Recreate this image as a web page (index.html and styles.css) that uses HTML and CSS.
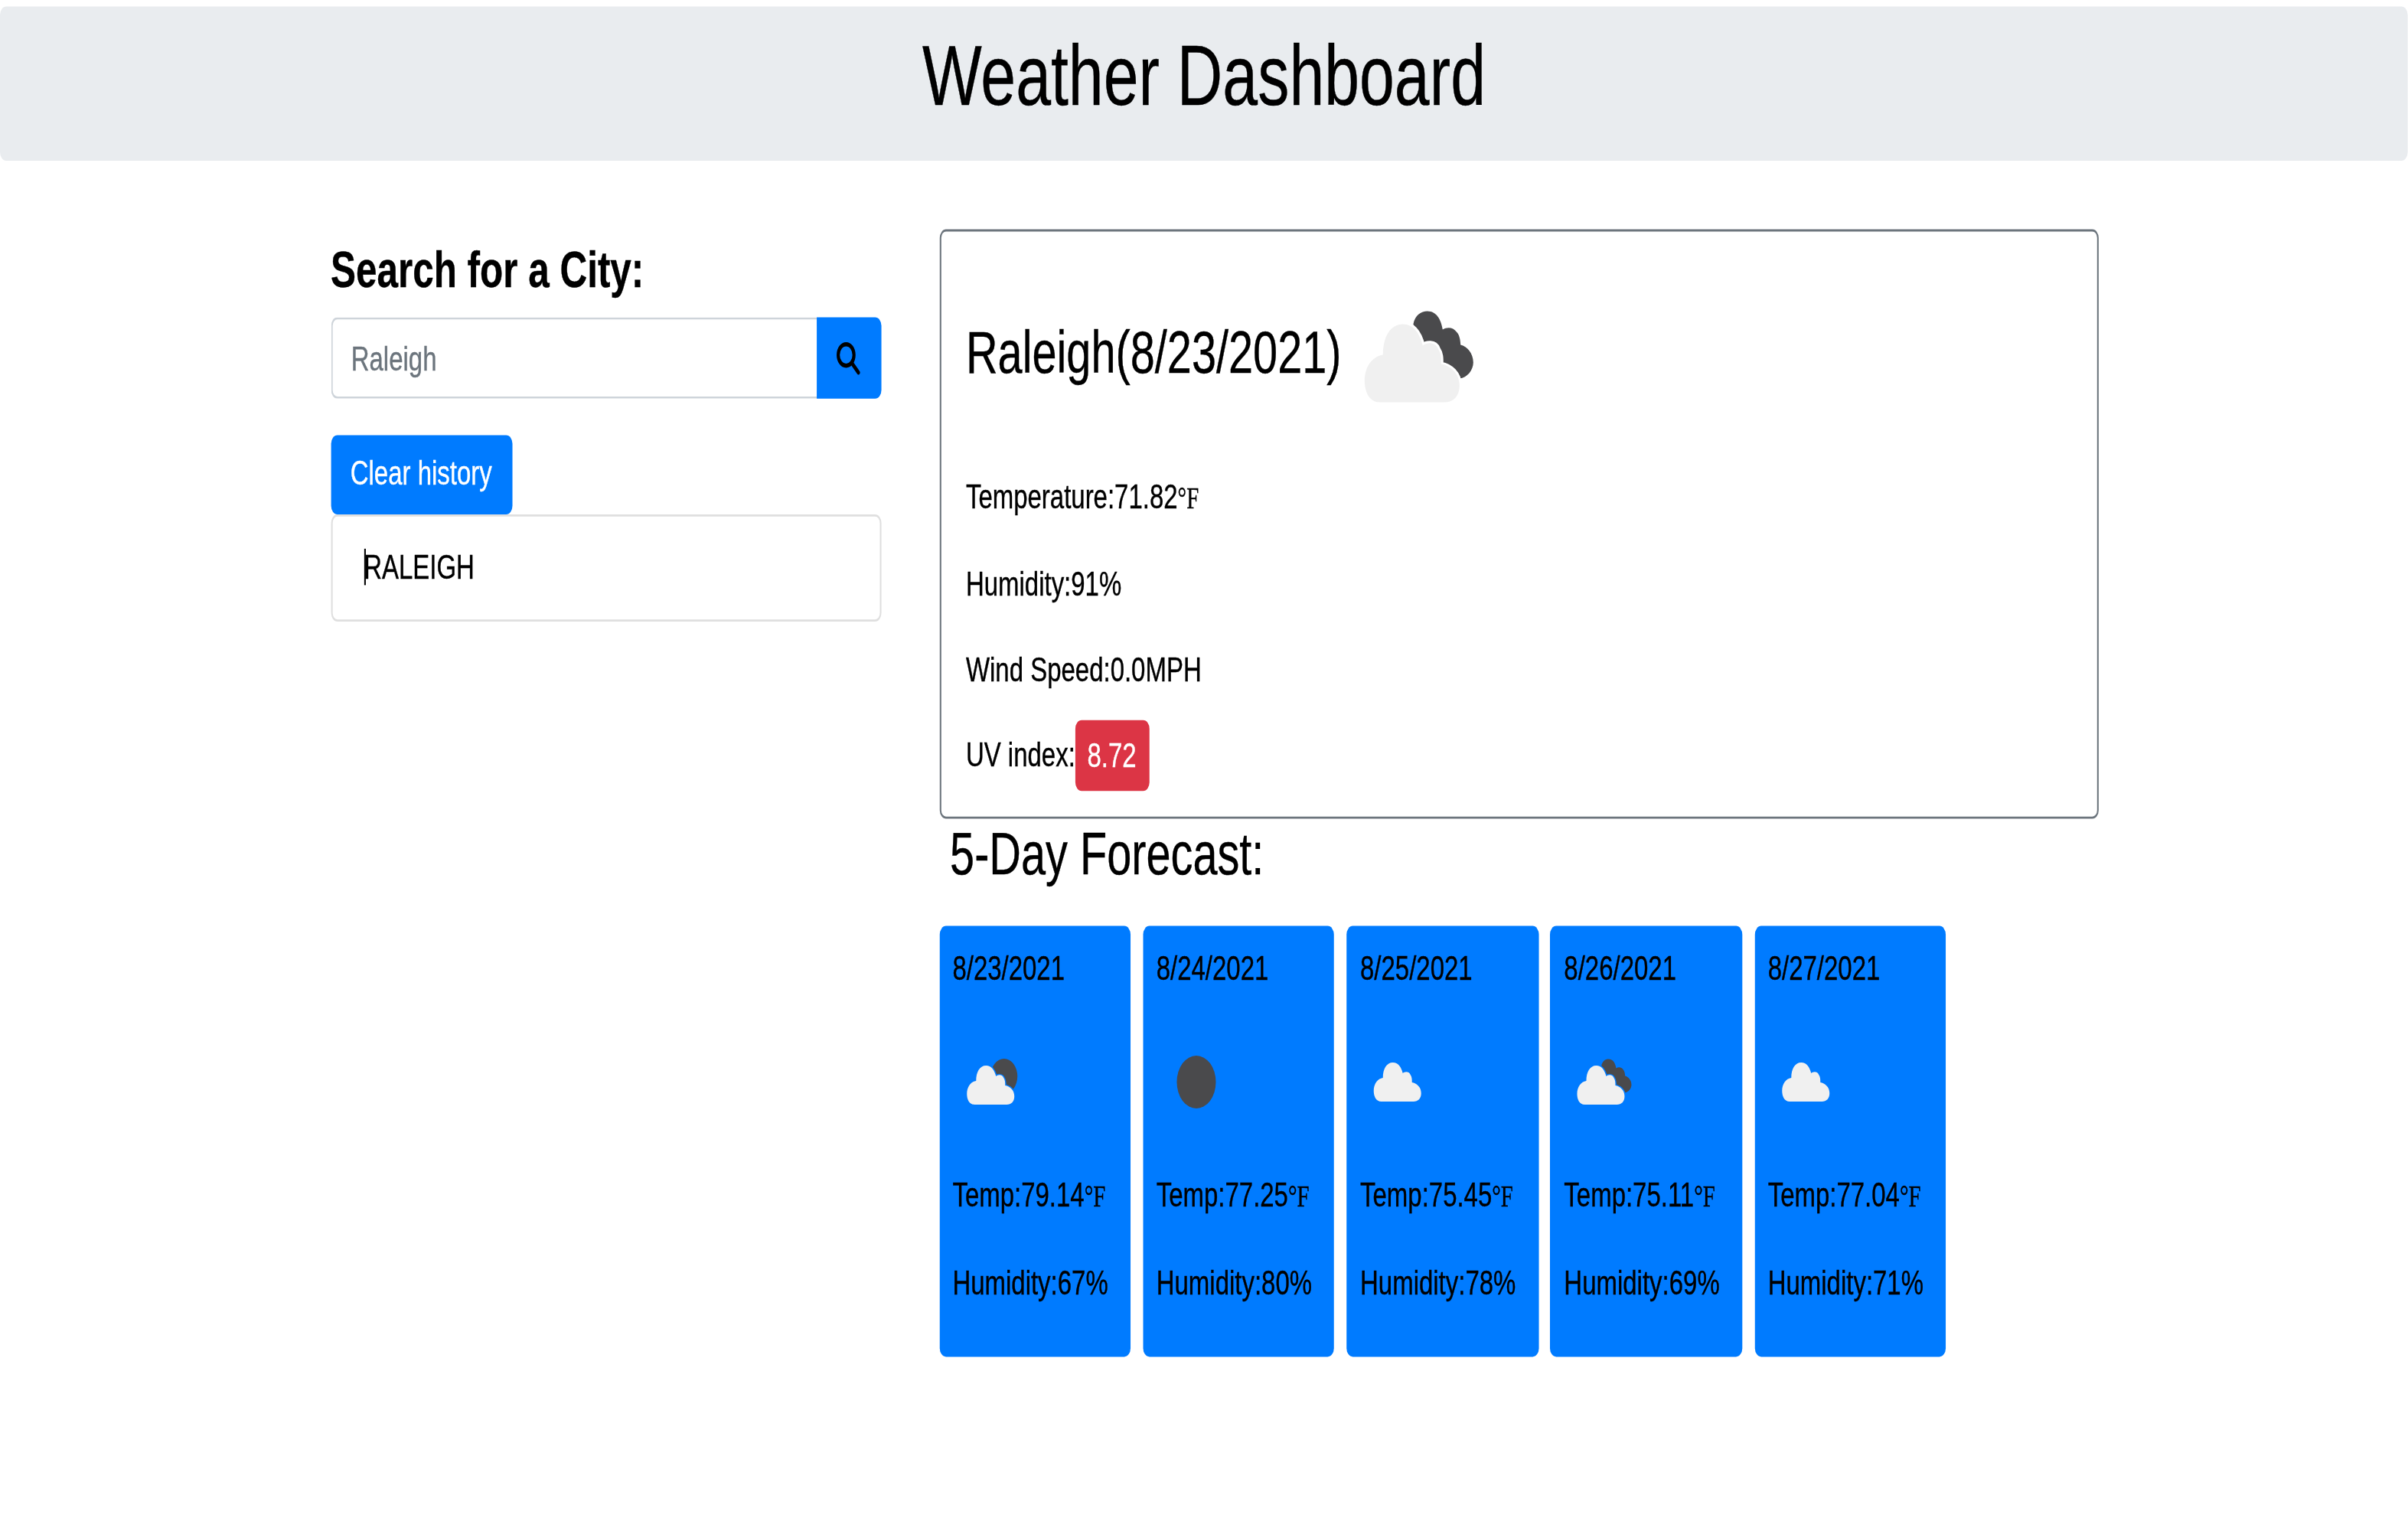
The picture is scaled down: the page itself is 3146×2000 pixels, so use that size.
FILE: index.html
```html
<!DOCTYPE html>
<html lang="en">
<head>
<meta charset="utf-8">
<title>Weather Dashboard</title>
<link rel="stylesheet" href="styles.css">
</head>
<body>
<svg class="defs" width="0" height="0" aria-hidden="true">
  <defs>
    <path id="cloud-shape" d="M29 99C22 99 19 92 19 85C19 76 24 69 31 68C31 56 36 48 44 48C51 48 55 54 57 62C59 60 65 59 67 64C69 67 69 70 69 74C75 75 81 80 81 88C81 95 77 99 71 99Z"/>
    <mask id="behind-cloud" maskUnits="userSpaceOnUse" x="0" y="0" width="103" height="140">
      <rect width="103" height="140" fill="#fff"/>
      <use href="#cloud-shape" fill="#000" stroke="#000" stroke-width="3"/>
    </mask>
    <symbol id="icon-few" viewBox="0 0 103 140" preserveAspectRatio="none">
      <ellipse cx="67.5" cy="62" rx="17.5" ry="23" fill="#4a4a4c" mask="url(#behind-cloud)"/>
      <use href="#cloud-shape" fill="#f0f0f0"/>
    </symbol>
    <symbol id="icon-clear" viewBox="0 0 103 140" preserveAspectRatio="none">
      <ellipse cx="53" cy="69.5" rx="25.5" ry="34.5" fill="#4a4a4c"/>
    </symbol>
    <symbol id="icon-scattered" viewBox="0 0 103 140" preserveAspectRatio="none">
      <use href="#cloud-shape" fill="#f0f0f0" y="-4"/>
    </symbol>
    <symbol id="icon-broken" viewBox="0 0 103 140" preserveAspectRatio="none">
      <path d="M50.8 48C52 42 56 39.5 60 39.5C66 39.5 69 45 70 51.5C73 49.5 77 50 79 53C81 55 81.5 58 81.7 61.5C86 62.5 90 67 90 73C90 78 86 83 81 83.5L60 75Z" fill="#4a4a4c" mask="url(#behind-cloud)"/>
      <use href="#cloud-shape" fill="#f0f0f0"/>
    </symbol>
  </defs>
</svg>
<div class="viewport">
<div class="stage">
  <header class="banner"><h1 class="banner-title">Weather Dashboard</h1></header>
  <main class="layout">
    <aside class="sidebar">
      <h4 class="search-title">Search for a City:</h4>
      <div class="search-group">
        <input class="search-input" type="text" value="Raleigh" aria-label="City">
        <button class="search-button" type="button" aria-label="Search">
          <svg class="search-icon" viewBox="0 0 16 16"><ellipse cx="6.6" cy="6.6" rx="5" ry="5" fill="none" stroke="#000" stroke-width="2"/><path d="M10.3 10.4L14.4 14.8" stroke="#000" stroke-width="2" stroke-linecap="round" fill="none"/></svg>
        </button>
      </div>
      <button class="clear-button" type="button">Clear history</button>
      <ul class="history">
        <li class="history-item">RALEIGH<span class="text-cursor"></span></li>
      </ul>
    </aside>
    <section class="content">
      <div class="today">
        <div class="today-head">
          <h3 class="today-title">Raleigh(8/23/2021)</h3>
          <svg class="today-icon"><use href="#icon-broken"/></svg>
        </div>
        <p class="stat">Temperature:71.82<span class="deg">°F</span></p>
        <p class="stat">Humidity:91%</p>
        <p class="stat">Wind Speed:0.0MPH</p>
        <p class="stat stat-uv">UV index:<span class="uv-badge">8.72</span></p>
      </div>
      <h2 class="forecast-title">5-Day Forecast:</h2>
      <div class="forecast">
        <article class="day">
          <p class="day-date">8/23/2021</p>
          <svg class="day-icon"><use href="#icon-few"/></svg>
          <p class="day-line">Temp:79.14<span class="deg">°F</span></p>
          <p class="day-line">Humidity:67%</p>
        </article>
        <article class="day">
          <p class="day-date">8/24/2021</p>
          <svg class="day-icon"><use href="#icon-clear"/></svg>
          <p class="day-line">Temp:77.25<span class="deg">°F</span></p>
          <p class="day-line">Humidity:80%</p>
        </article>
        <article class="day">
          <p class="day-date">8/25/2021</p>
          <svg class="day-icon"><use href="#icon-scattered"/></svg>
          <p class="day-line">Temp:75.45<span class="deg">°F</span></p>
          <p class="day-line">Humidity:78%</p>
        </article>
        <article class="day">
          <p class="day-date">8/26/2021</p>
          <svg class="day-icon"><use href="#icon-broken"/></svg>
          <p class="day-line">Temp:75.11<span class="deg">°F</span></p>
          <p class="day-line">Humidity:69%</p>
        </article>
        <article class="day">
          <p class="day-date">8/27/2021</p>
          <svg class="day-icon"><use href="#icon-scattered"/></svg>
          <p class="day-line">Temp:77.04<span class="deg">°F</span></p>
          <p class="day-line">Humidity:71%</p>
        </article>
      </div>
    </section>
  </main>
</div>
</div>
</body>
</html>
```
FILE: styles.css
```css
* { box-sizing: border-box; }
html, body { height: 100%; }
html { background: #fff; }
body { margin: 0; font-family: "Liberation Sans", Arial, sans-serif; font-size: 16px; line-height: 24px; color: #000; -webkit-text-stroke: .15px currentColor; }
.defs { position: absolute; }

.viewport { width: 100%; height: 2000px; overflow: hidden; }
/* The screenshot is an anamorphically stretched page, so the whole page is laid out at its source size and scaled. */
.stage { width: 1527.2px; height: 714.3px; padding-top: 3.2px; transform: scale(2.06, 2.8); transform-origin: 0 0; filter: blur(.25px); }

.banner { background: #e9ecef; border-radius: 4px; padding: 8px 0 16px; }
.banner-title { margin: 0; font-size: 40px; line-height: 48px; font-weight: 400; text-align: center; }

.layout { display: grid; grid-template-columns: 349px 735px; column-gap: 36.9px; padding-left: 209.7px; margin-top: 32.3px; }

.sidebar { padding-top: 4.1px; }
.search-title { margin: 0 0 7.8px; font-size: 24px; line-height: 28.8px; font-weight: 700; }
.search-group { display: flex; height: 38.3px; margin-bottom: 16.3px; }
.search-input { flex: 1; min-width: 0; font: inherit; color: #6c757d; padding: 6.6px 12px 5.4px; background: #fff; border: 1px solid #ced4da; border-right: 0; border-radius: 4px 0 0 4px; outline: 0; }
.search-button { width: 40.6px; display: flex; align-items: center; justify-content: center; padding: 0; background: #007bff; border: 0; border-radius: 0 4px 4px 0; }
.search-icon { width: 16px; height: 16px; }
.clear-button { display: block; height: 37px; padding: 0 12.5px; font: inherit; color: #fff; background: #007bff; border: 0; border-radius: 4px; }

.history { list-style: none; margin: 0; padding: 0; }
.history-item { position: relative; padding: 12.4px 20px 11.6px; border: 1px solid rgba(0, 0, 0, .125); border-radius: 4px; color: #000; }
.text-cursor { position: absolute; left: 20.4px; top: 15.6px; width: 1px; height: 17px; background: #000; }

.today { height: 274.5px; padding: 8.3px 16px 0; border: 1px solid #6c757d; border-radius: 4px; }
.today-head { display: flex; align-items: center; height: 100px; margin-bottom: 3.2px; }
.today-title { margin: 0; font-size: 28px; line-height: 33.6px; font-weight: 400; position: relative; top: -2.3px; }
.today-icon { display: block; width: 100px; height: 100px; margin-left: -3.5px; }
.stat { margin: 0 0 16px; }
.stat-uv { margin-top: -4.5px; }
.uv-badge { display: inline-block; margin-left: -.4px; padding: 4.5px 8px; color: #fff; background: #dc3545; border-radius: 4px; }
.deg { font-family: "Liberation Serif", "Times New Roman", serif; font-size: 14px; }

.forecast-title { margin: .4px 0 15.8px 6.9px; font-size: 28px; line-height: 33.6px; font-weight: 400; }
.forecast { display: flex; gap: 7.9px; }
.day { width: 121.4px; height: 201.2px; padding: 8.4px 8px 8px 8.5px; background: #007bff; border-radius: 4px; }
.day-date { margin: 0 0 16px; }
.day-icon { display: block; width: 50px; height: 50px; margin: 0 0 15.7px -.5px; }
.day-line { margin: 0 0 15.7px; }
```
